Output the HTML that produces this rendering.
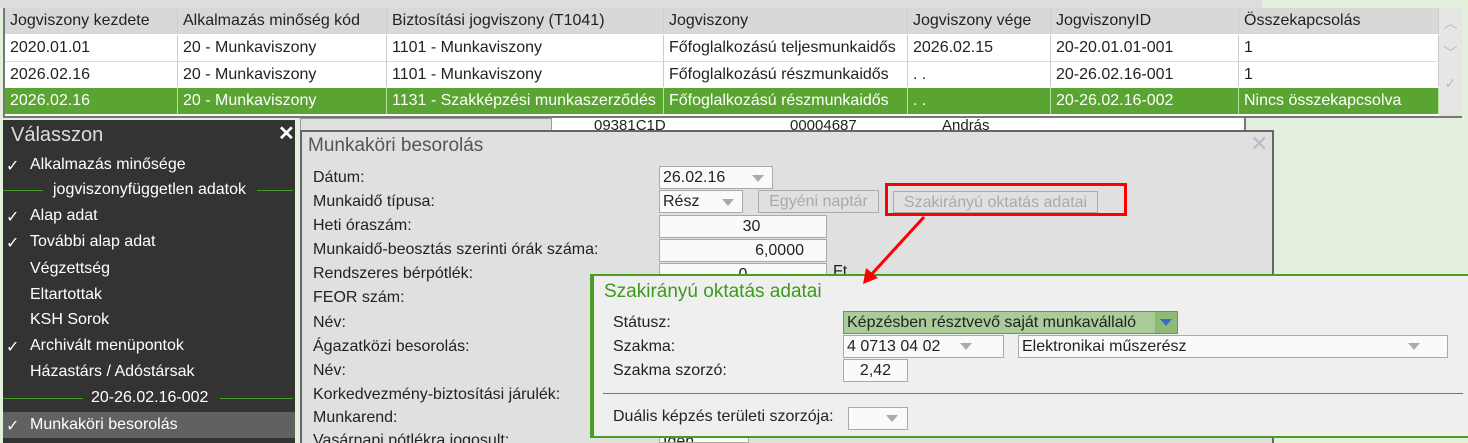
<!DOCTYPE html><html><head><meta charset="utf-8"><style>
*{margin:0;padding:0;box-sizing:border-box}
html{width:1468px;height:443px;overflow:hidden}
body{width:1468px;height:443px;overflow:hidden;background:#e4f0de;font-family:"Liberation Sans",sans-serif;font-size:16px;color:#222;position:relative}
.a{position:absolute;white-space:nowrap}
.grid{left:3px;top:8px;width:1459px;height:110px;background:#fff;border:2px solid #777;border-top:0}
.c{position:absolute;height:26px;line-height:26px;padding-left:5px;border-right:1px solid #ccc;font-size:16px}
.h{background:#d8d8d8}
.g{background:#5aa532;color:#fff;border-right:1px solid #b9e0a0}
.in{position:absolute;background:#fafafa;border:1px solid #aaa;height:23px;line-height:21px;font-size:16px;padding:0 3px}
.tri{position:absolute;width:0;height:0;border-left:6px solid transparent;border-right:6px solid transparent;border-top:7px solid #aaa}
.lb{position:absolute;left:313px;font-size:16px}
.m{position:absolute;left:30px;color:#fff;font-size:16px}
.ck{position:absolute;left:6px;color:#fff;font-size:16px}
</style></head><body>
<div class="a" style="left:0;top:0;width:1262px;height:8px;background:#ddd"></div>
<div class="a grid">
<div class="c h" style="left:0;top:0;width:173px">Jogviszony kezdete</div>
<div class="c h" style="left:173px;top:0;width:209px">Alkalmazás minőség kód</div>
<div class="c h" style="left:382px;top:0;width:277px">Biztosítási jogviszony (T1041)</div>
<div class="c h" style="left:659px;top:0;width:244px">Jogviszony</div>
<div class="c h" style="left:903px;top:0;width:143px">Jogviszony vége</div>
<div class="c h" style="left:1046px;top:0;width:188px">JogviszonyID</div>
<div class="c h" style="left:1234px;top:0;width:200px">Összekapcsolás</div>
<div class="c" style="left:0;top:27px;width:173px">2020.01.01</div>
<div class="c" style="left:173px;top:27px;width:209px">20 - Munkaviszony</div>
<div class="c" style="left:382px;top:27px;width:277px">1101 - Munkaviszony</div>
<div class="c" style="left:659px;top:27px;width:244px">Főfoglalkozású teljesmunkaidős</div>
<div class="c" style="left:903px;top:27px;width:143px">2026.02.15</div>
<div class="c" style="left:1046px;top:27px;width:188px">20-20.01.01-001</div>
<div class="c" style="left:1234px;top:27px;width:200px">1</div>
<div class="c" style="left:0;top:53px;width:173px;border-top:1px solid #ddd">2026.02.16</div>
<div class="c" style="left:173px;top:53px;width:209px;border-top:1px solid #ddd">20 - Munkaviszony</div>
<div class="c" style="left:382px;top:53px;width:277px;border-top:1px solid #ddd">1101 - Munkaviszony</div>
<div class="c" style="left:659px;top:53px;width:244px;border-top:1px solid #ddd">Főfoglalkozású részmunkaidős</div>
<div class="c" style="left:903px;top:53px;width:143px;border-top:1px solid #ddd">. .</div>
<div class="c" style="left:1046px;top:53px;width:188px;border-top:1px solid #ddd">20-26.02.16-001</div>
<div class="c" style="left:1234px;top:53px;width:200px;border-top:1px solid #ddd">1</div>
<div class="c g" style="left:0;top:80px;width:173px">2026.02.16</div>
<div class="c g" style="left:173px;top:80px;width:209px">20 - Munkaviszony</div>
<div class="c g" style="left:382px;top:80px;width:277px">1131 - Szakképzési munkaszerződés</div>
<div class="c g" style="left:659px;top:80px;width:244px">Főfoglalkozású részmunkaidős</div>
<div class="c g" style="left:903px;top:80px;width:143px">. .</div>
<div class="c g" style="left:1046px;top:80px;width:188px">20-26.02.16-002</div>
<div class="c g" style="left:1234px;top:80px;width:200px">Nincs összekapcsolva</div>
<div class="a" style="left:1434px;top:0;width:23px;height:108px;background:#e6e6e6;color:#bbb;text-align:center;font-size:14px;line-height:30px">︿<br>﹀<br>✓</div>
</div>
<div class="a" style="left:300px;top:118px;width:252px;height:14px;background:#e0e0e0;border:1px solid #999"></div>
<div class="a" style="left:552px;top:118px;width:694px;height:14px;background:#fff;border-right:2px solid #777;font-size:15px;line-height:16px;overflow:hidden"><span style="position:absolute;left:42px">09381C1D</span><span style="position:absolute;left:238px">00004687</span><span style="position:absolute;left:390px">András</span></div>
<div class="a" style="left:3px;top:120px;width:292px;height:323px;background:#333"></div>
<div class="a" style="left:11px;top:124px;color:#ddd;font-size:20px">Válasszon</div>
<div class="a" style="left:278px;top:121px;color:#fff;font-size:20px;font-weight:bold">✕</div>
<div class="ck" style="top:156px">✓</div><div class="m" style="top:156px">Alkalmazás minősége</div>
<div class="a" style="left:3px;top:190px;width:40px;border-top:1px solid #4a9a2a"></div><div class="a" style="left:257px;top:190px;width:36px;border-top:1px solid #4a9a2a"></div>
<div class="a" style="left:53px;top:181px;color:#fff">jogviszonyfüggetlen adatok</div>
<div class="ck" style="top:207px">✓</div><div class="m" style="top:207px">Alap adat</div>
<div class="ck" style="top:233px">✓</div><div class="m" style="top:233px">További alap adat</div>
<div class="m" style="top:260px">Végzettség</div>
<div class="m" style="top:286px">Eltartottak</div>
<div class="m" style="top:311px">KSH Sorok</div>
<div class="ck" style="top:337px">✓</div><div class="m" style="top:337px">Archivált menüpontok</div>
<div class="m" style="top:363px">Házastárs / Adóstársak</div>
<div class="a" style="left:3px;top:398px;width:80px;border-top:1px solid #4a9a2a"></div><div class="a" style="left:220px;top:398px;width:73px;border-top:1px solid #4a9a2a"></div>
<div class="a" style="left:91px;top:389px;color:#fff">20-26.02.16-002</div>
<div class="a" style="left:3px;top:412px;width:292px;height:26px;background:#616161"></div>
<div class="ck" style="top:416px">✓</div><div class="m" style="top:416px">Munkaköri besorolás</div>
<div class="a" style="left:300px;top:130px;width:974px;height:313px;background:#e0e0e0;border:2px solid #666;border-bottom:0"></div>
<div class="a" style="left:308px;top:135px;font-size:19px;color:#555">Munkaköri besorolás</div>
<div class="a" style="left:1250px;top:131px;font-size:22px;color:#bbb">✕</div>
<div class="lb" style="top:169px">Dátum:</div>
<div class="lb" style="top:193px">Munkaidő típusa:</div>
<div class="lb" style="top:217px">Heti óraszám:</div>
<div class="lb" style="top:241px">Munkaidő-beosztás szerinti órák száma:</div>
<div class="lb" style="top:265px">Rendszeres bérpótlék:</div>
<div class="lb" style="top:289px">FEOR szám:</div>
<div class="lb" style="top:314px">Név:</div>
<div class="lb" style="top:338px">Ágazatközi besorolás:</div>
<div class="lb" style="top:362px">Név:</div>
<div class="lb" style="top:386px">Korkedvezmény-biztosítási járulék:</div>
<div class="lb" style="top:409px">Munkarend:</div>
<div class="lb" style="top:432px">Vasárnapi pótlékra jogosult:</div>
<div class="in" style="left:659px;top:166px;width:114px">26.02.16</div><div class="tri" style="left:752px;top:175px"></div>
<div class="in" style="left:659px;top:190px;width:84px">Rész</div><div class="tri" style="left:722px;top:199px"></div>
<div class="in" style="left:758px;top:190px;width:121px;background:#e0e0e0;color:#aaa;text-align:center">Egyéni naptár</div>
<div class="in" style="left:893px;top:191px;width:205px;background:#e0e0e0;color:#aaa;text-align:center;height:22px">Szakirányú oktatás adatai</div>
<div class="in" style="left:659px;top:215px;width:168px;text-align:center;padding-left:20px">30</div>
<div class="in" style="left:659px;top:239px;width:168px;text-align:right;padding-right:22px">6,0000</div>
<div class="in" style="left:659px;top:263px;width:168px;text-align:center">0</div>
<div class="a" style="left:833px;top:263px">Ft</div>
<div class="in" style="left:659px;top:432px;width:90px;height:11px;line-height:18px;overflow:hidden">Igen</div>
<div class="a" style="left:885px;top:183px;width:242px;height:33px;border:3px solid #f00"></div>
<div class="a" style="left:590px;top:274px;width:878px;height:164px;background:#efefef;border-top:2px solid #4a9e20;border-bottom:2px solid #4a9e20;border-left:4px solid #4a9e20"></div>
<div class="a" style="left:604px;top:281px;font-size:19px;color:#3c9a1c">Szakirányú oktatás adatai</div>
<div class="a" style="left:613px;top:314px">Státusz:</div>
<div class="a" style="left:613px;top:338px">Szakma:</div>
<div class="a" style="left:613px;top:362px">Szakma szorzó:</div>
<div class="a" style="left:613px;top:408px">Duális képzés területi szorzója:</div>
<div class="in" style="left:843px;top:311px;width:335px;background:#a9cc98;border-color:#5aa532">Képzésben résztvevő saját munkavállaló</div>
<div class="a" style="left:1155px;top:312px;width:22px;height:21px;background:#8dbb76"></div>
<div class="tri" style="left:1160px;top:319px;border-top-color:#3a6ec0"></div>
<div class="in" style="left:843px;top:335px;width:161px">4 0713 04 02</div><div class="tri" style="left:960px;top:343px"></div>
<div class="in" style="left:1018px;top:335px;width:430px">Elektronikai műszerész</div><div class="tri" style="left:1408px;top:343px"></div>
<div class="in" style="left:843px;top:359px;width:65px;text-align:center">2,42</div>
<div class="a" style="left:603px;top:393px;width:860px;border-top:1px solid #777"></div>
<div class="in" style="left:848px;top:407px;width:60px"></div><div class="tri" style="left:886px;top:415px"></div>
<svg class="a" style="left:0;top:0" width="1468" height="443"><line x1="924" y1="217" x2="870" y2="276" stroke="#f00" stroke-width="3"/><polygon points="863,284 866,268 878,278" fill="#f00"/></svg>
</body></html>
